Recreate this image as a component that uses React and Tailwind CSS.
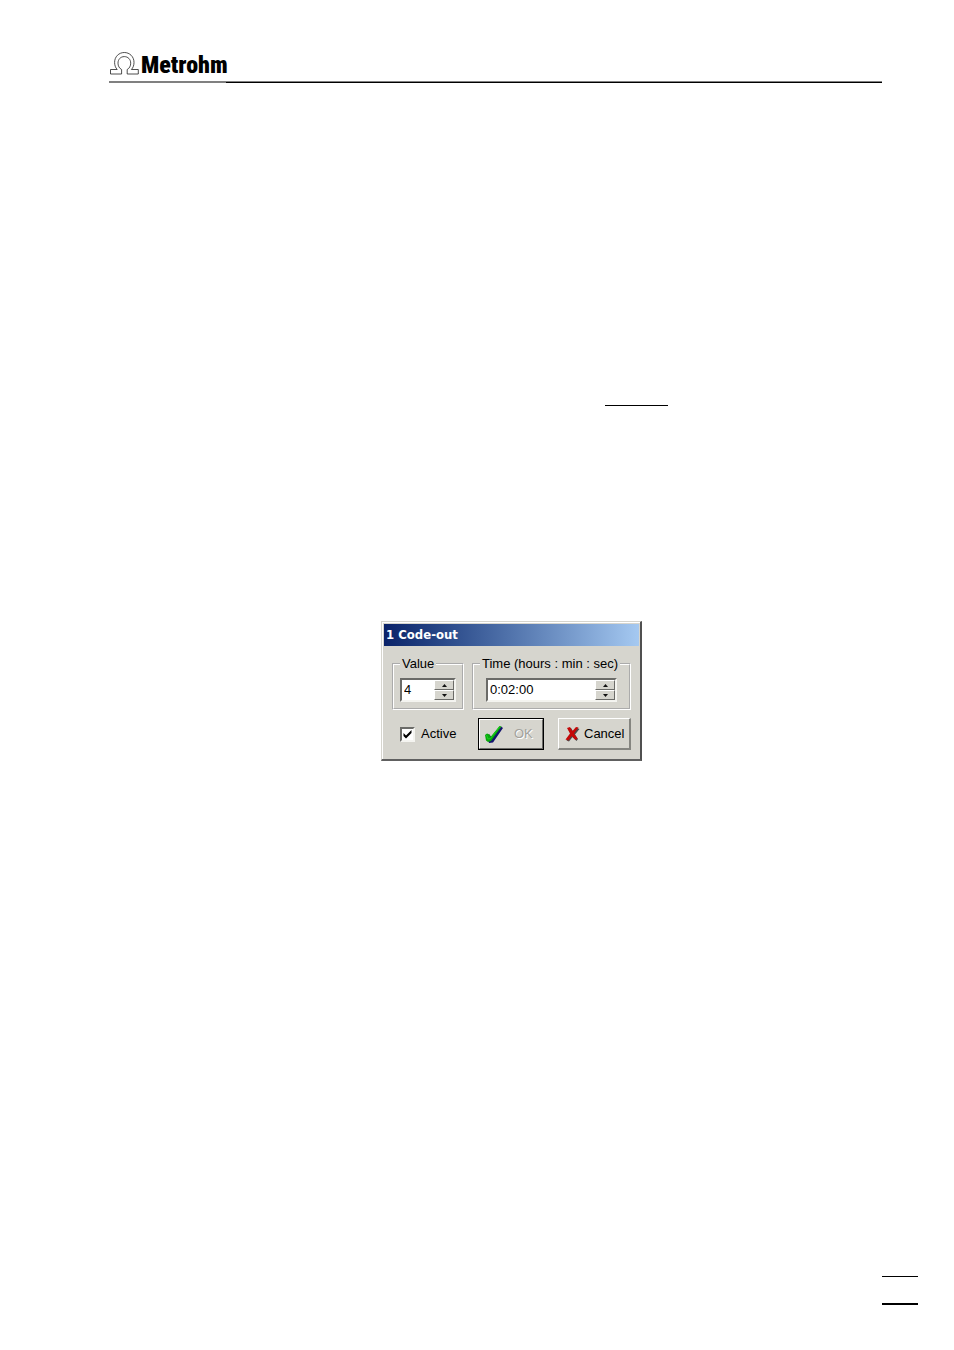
import React, { useState } from "react";

const face = "bg-[#d6d5ce]";
const raised =
  "border border-t-white border-l-white border-r-[#6b6b68] border-b-[#6b6b68]";
const sunken =
  "border-2 border-t-[#6b6b68] border-l-[#6b6b68] border-r-[#f4f4f0] border-b-[#f4f4f0]";

function OmegaMark() {
  return (
    <svg width="30" height="24" viewBox="0 0 30 24" fill="none" stroke="#222" strokeWidth="0.8" aria-hidden="true">
      <path d="M1.5 23V18.5H8.2C6.4 16.7 5.6 14 5.6 11.4C5.6 5.6 10 1.5 15.3 1.5S25 5.6 25 11.4C25 14 24.2 16.7 22.4 18.5H29.3V23H18.2V18.5C20.4 17.4 21.7 14.9 21.7 12.2C21.7 8.3 19 5.6 15.3 5.6S9 8.3 9 12.2C9 14.9 10.3 17.4 12.6 18.5V23Z" />
    </svg>
  );
}

function Arrow({ down }) {
  return (
    <svg width="5" height="3" viewBox="0 0 5 3" fill="#111" aria-hidden="true">
      <path d={down ? "M0 0H5L2.5 3Z" : "M0 3H5L2.5 0Z"} />
    </svg>
  );
}

function Spin({ label, value, onChange, onUp, onDown }) {
  const button = `flex min-h-0 flex-1 items-center justify-center ${face} ${raised}`;
  return (
    <div className={`flex h-6 bg-white ${sunken}`}>
      <input
        aria-label={label}
        value={value}
        onChange={(e) => onChange(e.target.value)}
        className="w-0 min-w-0 flex-1 bg-white pl-0.5 text-[13px] text-black outline-none"
      />
      <div className="flex w-5 shrink-0 flex-col">
        <button type="button" aria-label={`Increase ${label}`} onClick={onUp} className={button}>
          <Arrow />
        </button>
        <button type="button" aria-label={`Decrease ${label}`} onClick={onDown} className={button}>
          <Arrow down />
        </button>
      </div>
    </div>
  );
}

function Group({ title, className, children }) {
  return (
    <fieldset className={`min-w-0 border-2 border-white px-1.5 pt-1.5 pb-1.5 [border-style:groove] ${className}`}>
      <legend className="px-0.5 text-[13px] leading-4 whitespace-nowrap">{title}</legend>
      {children}
    </fieldset>
  );
}

function CheckIcon() {
  return (
    <svg width="20" height="20" viewBox="0 0 20 20" aria-hidden="true">
      <path d="M2.5 11.5L5.5 10.5L7.5 13.5L17 2.5L19 4L9 18.5L5 19Z" fill="#14146e" />
      <path d="M1 11L3 9.5L5.5 10.5L6.5 13L15.5 2L17.5 2.5L7 17L4 18L2 16.5Z" fill="#08a80c" />
      <path d="M2.5 11L4 15L6.5 14.5L15.5 3" fill="none" stroke="#18d41c" strokeWidth="1" />
    </svg>
  );
}

function CrossIcon() {
  return (
    <svg width="15" height="16" viewBox="0 0 15 16" aria-hidden="true">
      <path d="M3 3L6 2L8.5 6L12 2L14.5 3L10 8.5L13 13L11.5 15L7.5 11L4 15.5L1.5 14.5L6 8.5Z" fill="#4a4a4a" />
      <path d="M2 2L5 1L7.5 5L11 1L13.5 1.5L9 7.5L12.5 12.5L10.5 14L6.5 10L3.5 14.5L.5 13.5L5 7.5Z" fill="#c40808" />
    </svg>
  );
}

function seconds(text) {
  return text.split(":").reduce((sum, part) => sum * 60 + (Number(part) || 0), 0);
}

function clock(total) {
  const t = Math.max(0, total);
  const two = (n) => String(n).padStart(2, "0");
  return `${Math.floor(t / 3600)}:${two(Math.floor(t / 60) % 60)}:${two(t % 60)}`;
}

function CodeOutDialog() {
  const [value, setValue] = useState("4");
  const [time, setTime] = useState("0:02:00");
  const [active, setActive] = useState(true);

  return (
    <div className="border-t border-r-2 border-b-2 border-l border-t-[#d6d5ce] border-r-[#505050] border-b-[#606060] border-l-[#d6d5ce]">
      <section aria-label="1 Code-out" className={`w-[258px] border-t border-l border-white p-px text-black ${face}`}>
        <h1 className="bg-linear-to-r from-[#0b2369] to-[#a5c9f1] px-0.5 font-['DejaVu_Sans_Condensed','DejaVu_Sans',sans-serif] text-[13px] leading-[22px] font-bold text-white">
          1 Code-out
        </h1>
        <div className="flex flex-col gap-2 px-2 pt-2.5 pb-2">
          <div className="flex gap-2">
            <Group title="Value" className="w-[72px] shrink-0">
              <Spin
                label="Value"
                value={value}
                onChange={setValue}
                onUp={() => setValue(String(Number(value) + 1))}
                onDown={() => setValue(String(Math.max(0, Number(value) - 1)))}
              />
            </Group>
            <Group title="Time (hours : min : sec)" className="flex-1">
              <div className="px-1.5">
                <Spin
                  label="Time"
                  value={time}
                  onChange={setTime}
                  onUp={() => setTime(clock(seconds(time) + 1))}
                  onDown={() => setTime(clock(seconds(time) - 1))}
                />
              </div>
            </Group>
          </div>
          <div className="flex items-center justify-between pl-2 text-[13px]">
            <label className="flex items-center gap-1.5">
              <span className="grid">
                <input
                  type="checkbox"
                  checked={active}
                  onChange={(e) => setActive(e.target.checked)}
                  className={`col-start-1 row-start-1 size-[15px] appearance-none bg-white ${sunken}`}
                />
                {active && (
                  <svg className="pointer-events-none col-start-1 row-start-1" width="15" height="15" viewBox="0 0 15 15" aria-hidden="true">
                    <path d="M3.5 6V9L6 11.5L11.5 6V3L6 8.5Z" fill="#000" />
                  </svg>
                )}
              </span>
              Active
            </label>
            <div className="flex gap-3.5">
              <button type="button" disabled className={`w-[66px] border border-black ${face}`}>
                <span className={`flex h-[30px] items-center gap-2.5 pl-1 ${raised}`}>
                  <CheckIcon />
                  <span className="text-[#a3a29d] [text-shadow:1px_1px_0_#fff]">OK</span>
                </span>
              </button>
              <button type="button" className={`flex h-8 w-[73px] items-center gap-1 pl-1.5 ${face} border-t border-r-2 border-b-2 border-l border-t-white border-r-[#858580] border-b-[#858580] border-l-white`}>
                <CrossIcon />
                Cancel
              </button>
            </div>
          </div>
        </div>
      </section>
    </div>
  );
}

export default function App() {
  return (
    <div className="flex min-h-screen flex-col bg-white font-['Liberation_Sans',Arial,sans-serif]">
      <header className="mr-[72px] ml-[109px] pt-[51px]">
        <div className="flex h-[30px] items-start gap-0.5">
          <OmegaMark />
          <span className="font-['Liberation_Sans_Narrow','Roboto_Condensed','Open_Sans_Condensed','DejaVu_Sans_Condensed',sans-serif] text-[24px] leading-[28px] font-black text-black">
            Metrohm
          </span>
        </div>
        <div className="flex border-t border-[#808080]">
          <div className="h-px w-[117px] bg-[#808080]" />
          <div className="h-px flex-1 bg-black" />
        </div>
      </header>
      <main className="flex-1">
        <div className="mt-[322px] ml-[605px] h-px w-[63px] bg-black" />
        <div className="mt-[215px] ml-[381px] flex">
          <CodeOutDialog />
        </div>
      </main>
      <footer className="mr-9 mb-[45px] flex w-9 flex-col gap-[26px] self-end">
        <div className="h-px bg-black" />
        <div className="h-0.5 bg-black" />
      </footer>
    </div>
  );
}
